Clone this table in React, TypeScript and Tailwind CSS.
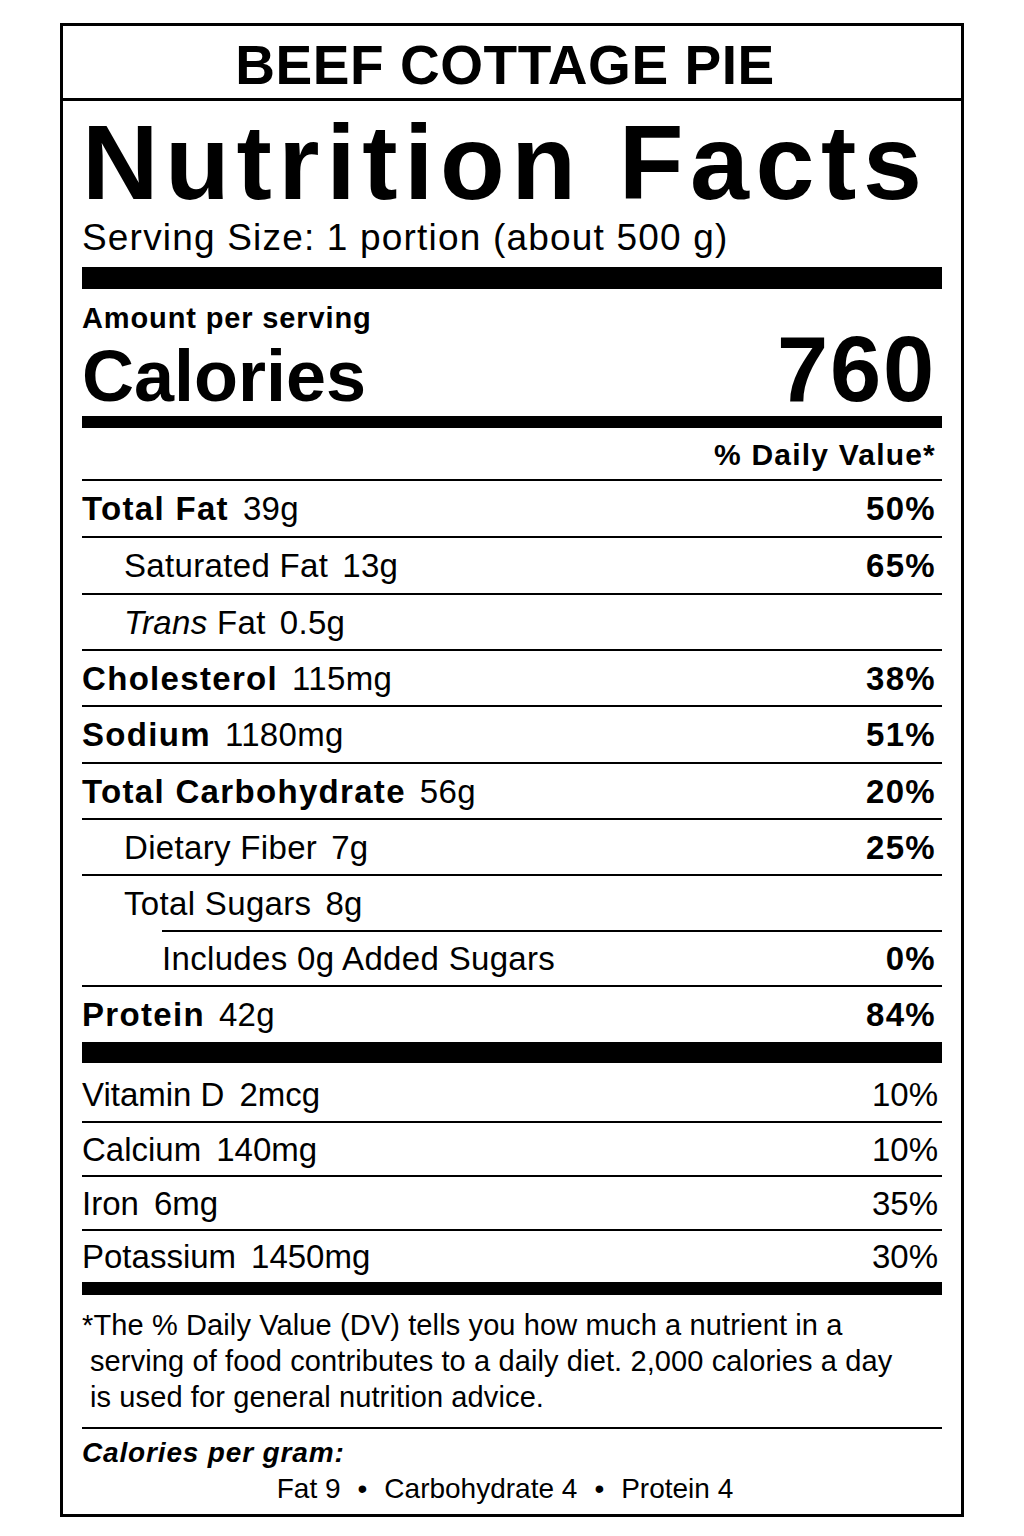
import type { ReactNode } from 'react'

type Nutrient = {
  name: ReactNode
  value: string
  dv?: string
  h: string
  bold?: boolean
  pad?: string
  shift?: string
}

const nutrients: Nutrient[] = [
  { name: 'Total Fat', value: '39g', dv: '50%', h: 'h-[57px]', bold: true },
  { name: 'Saturated Fat', value: '13g', dv: '65%', h: 'h-[57px]', pad: 'pl-[42px]' },
  { name: <><em>Trans</em> Fat</>, value: '0.5g', h: 'h-[56px]', pad: 'pl-[42px]' },
  { name: 'Cholesterol', value: '115mg', dv: '38%', h: 'h-[56px]', bold: true },
  { name: 'Sodium', value: '1180mg', dv: '51%', h: 'h-[57px]', bold: true },
  { name: 'Total Carbohydrate', value: '56g', dv: '20%', h: 'h-[56px]', bold: true },
  { name: 'Dietary Fiber', value: '7g', dv: '25%', h: 'h-[56px]', pad: 'pl-[42px]' },
  { name: 'Total Sugars', value: '8g', h: 'h-[56px]', pad: 'pl-[42px]' },
  { name: 'Includes 0g Added Sugars', value: '', dv: '0%', h: 'h-[55px]', shift: 'ml-[80px]' },
  { name: 'Protein', value: '42g', dv: '84%', h: 'h-[57px]', bold: true },
]

const vitamins = [
  { name: 'Vitamin D', value: '2mcg', dv: '10%', h: 'h-[58px] pt-[4px]', line: '' },
  { name: 'Calcium', value: '140mg', dv: '10%', h: 'h-[54px]', line: 'border-t-2 border-black' },
  { name: 'Iron', value: '6mg', dv: '35%', h: 'h-[54px]', line: 'border-t-2 border-black' },
  { name: 'Potassium', value: '1450mg', dv: '30%', h: 'h-[53px]', line: 'border-t-2 border-black' },
]

export default function App() {
  return (
    <div className="min-h-[1536px] bg-white pt-[23px] pl-[60px] text-black font-['Liberation_Sans',Arial,sans-serif]">
      <div className="w-[904px] border-[3px] border-black">
        {/* Title */}
        <div className="h-[75px] pt-[6px] pr-[14px] flex items-center justify-center border-b-[3px] border-black">
          <h1 className="text-[55px] leading-none font-bold tracking-[0.01em]">BEEF COTTAGE PIE</h1>
        </div>

        <div className="px-[19px]">
          <h2 className="mt-[8px] text-[106px] leading-none font-bold tracking-[0.062em]">Nutrition Facts</h2>
          <p className="mt-[4px] text-[37px] leading-none tracking-[0.032em]">Serving Size: 1 portion (about 500 g)</p>

          <div className="mt-[11px] h-[22px] bg-black" />

          <p className="mt-[15px] text-[29px] leading-none font-bold tracking-[0.03em]">Amount per serving</p>
          <div className="mt-[-10px] flex items-baseline justify-between pr-[6px]">
            <span className="text-[72px] leading-none font-bold">Calories</span>
            <span className="text-[92px] leading-none font-bold tracking-[0.02em]">760</span>
          </div>

          <div className="mt-[1px] h-[12px] bg-black" />

          <div className="h-[51px] pt-[2px] flex items-center justify-end pr-[6px]">
            <span className="text-[30px] leading-none font-bold tracking-[0.04em]">% Daily Value*</span>
          </div>

          {nutrients.map((n, i) => (
            <div
              key={i}
              className={`flex items-center justify-between border-t-2 border-black pr-[6px] ${n.h} ${n.pad ?? ''} ${n.shift ?? ''}`}
            >
              <div className="text-[33px] leading-none">
                <span className={n.bold ? 'font-bold tracking-[0.04em]' : 'tracking-[0.01em]'}>{n.name}</span>
                {n.value && <span className="ml-[14px] tracking-[0.01em]">{n.value}</span>}
              </div>
              {n.dv && <span className="text-[33px] leading-none font-bold tracking-[0.04em]">{n.dv}</span>}
            </div>
          ))}

          <div className="h-[21px] bg-black" />

          {vitamins.map((v) => (
            <div key={v.name} className={`flex items-center justify-between pr-[4px] ${v.h} ${v.line}`}>
              <div className="text-[33px] leading-none">
                <span>{v.name}</span>
                <span className="ml-[15px]">{v.value}</span>
              </div>
              <span className="text-[33px] leading-none">{v.dv}</span>
            </div>
          ))}

          <div className="h-[13px] bg-black" />

          {/* Footnote */}
          <p className="mt-[12px] pl-[8px] -indent-[8px] text-[29px] leading-[36px] tracking-[0.004em]">
            *The % Daily Value (DV) tells you how much a nutrient in a
            <br />
            serving of food contributes to a daily diet. 2,000 calories a day
            <br />
            is used for general nutrition advice.
          </p>

          <div className="mt-[12px] border-t-2 border-black pt-[6px] pb-[7px]">
            <p className="text-[28px] leading-[36px] font-bold italic tracking-[0.03em]">Calories per gram:</p>
            <div className="flex items-center justify-center gap-[17px] pr-[14px] text-[28px] leading-[36px]">
              <span>Fat 9</span>
              <span>•</span>
              <span>Carbohydrate 4</span>
              <span>•</span>
              <span>Protein 4</span>
            </div>
          </div>
        </div>
      </div>
    </div>
  )
}
